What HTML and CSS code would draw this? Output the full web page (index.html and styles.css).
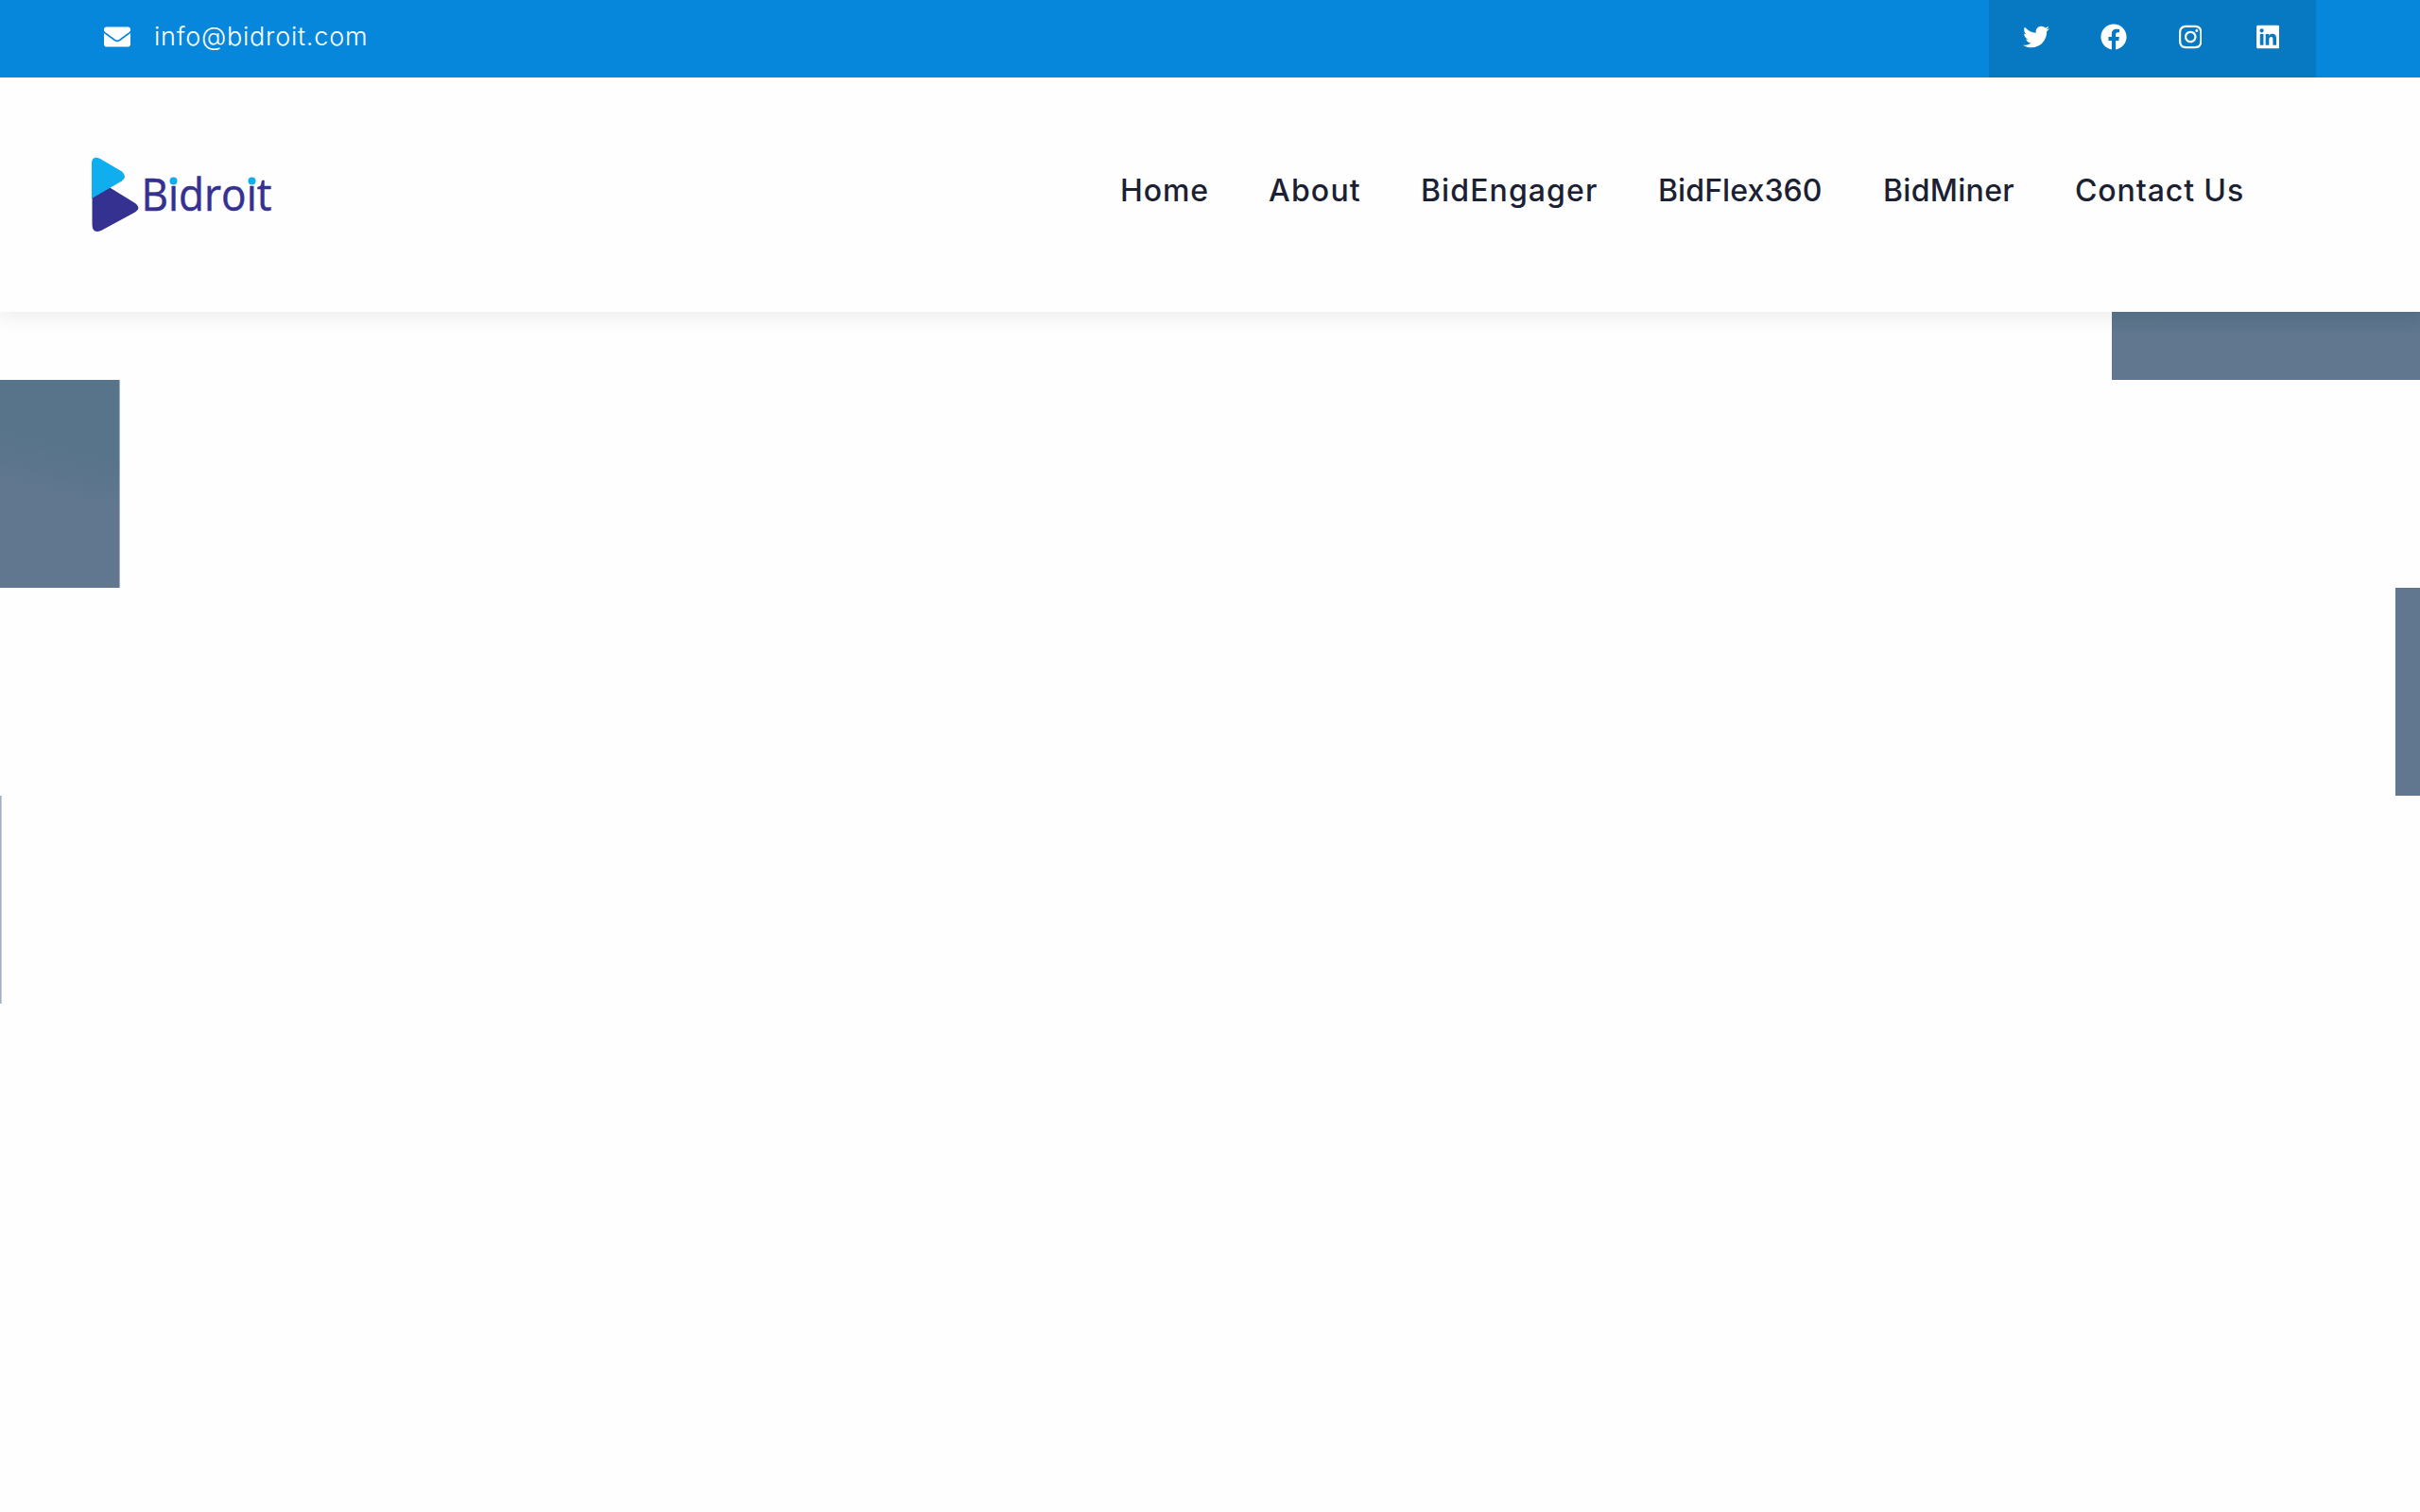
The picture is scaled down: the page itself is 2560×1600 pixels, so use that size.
FILE: index.html
```html
<!DOCTYPE html>
<html lang="en">

<head>
    <meta charset="UTF-8">
    <title>Bidroit</title>
    <link rel="stylesheet" href="styles.css">
</head>

<body>

    <div class="topbar">
        <a class="mail" href="mailto:info@bidroit.com">
            <svg width="28" height="28" viewBox="0 0 512 512"><path d="M502.3 190.8c3.9-3.1 9.7-.2 9.7 4.7V400c0 26.500-21.500 48-48 48H48c-26.500 0-48-21.500-48-48V195.600c0-5 5.700-7.800 9.700-4.700 22.400 17.400 52.100 39.500 154.100 113.600 21.100 15.400 56.700 47.800 92.200 47.600 35.700.3 72-32.800 92.300-47.600 102-74.100 131.600-96.300 154-113.700zM256 320c23.200.4 56.600-29.200 73.400-41.400 132.700-96.300 142.800-104.700 173.400-128.700 5.800-4.500 9.200-11.500 9.200-18.900v-19c0-26.500-21.500-48-48-48H48c-26.500 0-48 21.500-48 48v19c0 7.400 3.400 14.300 9.200 18.900 30.600 23.900 40.700 32.400 173.400 128.700 16.800 12.200 50.200 41.800 73.400 41.400z"/></svg>
            <span>info@bidroit.com</span>
        </a>

        <div class="social">
            <a href="#" aria-label="Twitter"><svg width="28" height="28" viewBox="0 0 512 512"><path d="M459.370 151.716c.325 4.548.325 9.097.325 13.645 0 138.720-105.583 298.558-298.558 298.558-59.452 0-114.680-17.219-161.137-47.106 8.447.974 16.568 1.299 25.340 1.299 49.055 0 94.213-16.568 130.274-44.832-46.132-.975-84.792-31.188-98.112-72.772 6.498.974 12.995 1.624 19.818 1.624 9.421 0 18.843-1.300 27.614-3.573-48.081-9.747-84.143-51.980-84.143-102.985v-1.299c13.969 7.797 30.214 12.670 47.431 13.319-28.264-18.843-46.781-51.005-46.781-87.391 0-19.492 5.197-37.360 14.294-52.954 51.655 63.675 129.300 105.258 216.365 109.807-1.624-7.797-2.599-15.918-2.599-24.040 0-57.828 46.782-104.934 104.934-104.934 30.213 0 57.502 12.670 76.670 33.137 23.715-4.548 46.456-13.320 66.599-25.340-7.798 24.366-24.366 44.833-46.132 57.827 21.117-2.273 41.584-8.122 60.426-16.243-14.292 20.791-32.161 39.308-52.628 54.253z"/></svg></a>
            <a href="#" aria-label="Facebook"><svg width="28" height="28" viewBox="0 0 512 512"><path d="M504 256C504 119 393 8 256 8S8 119 8 256c0 123.780 90.690 226.380 209.250 245V327.690h-63V256h63v-54.640c0-62.150 37-96.480 93.670-96.480 27.140 0 55.520 4.840 55.520 4.840v61h-31.280c-30.800 0-40.410 19.120-40.410 38.730V256h68.780l-11 71.690h-57.780V501C413.310 482.380 504 379.780 504 256z"/></svg></a>
            <a href="#" aria-label="Instagram"><svg width="24.500" height="28" viewBox="0 0 448 512"><path d="M224.100 141c-63.600 0-114.900 51.300-114.900 114.900s51.300 114.900 114.900 114.900S339 319.500 339 255.900 287.700 141 224.100 141zm0 189.600c-41.100 0-74.700-33.500-74.700-74.700s33.500-74.700 74.700-74.700 74.700 33.500 74.700 74.700-33.600 74.700-74.700 74.700zm146.400-194.300c0 14.900-12 26.800-26.800 26.800-14.900 0-26.800-12-26.800-26.800s12-26.800 26.800-26.800 26.800 12 26.800 26.800zm76.100 27.200c-1.700-35.900-9.900-67.700-36.200-93.900-26.200-26.200-58-34.400-93.900-36.200-37-2.100-147.900-2.100-184.900 0-35.800 1.700-67.600 9.900-93.900 36.100s-34.400 58-36.200 93.900c-2.100 37-2.100 147.900 0 184.900 1.700 35.900 9.900 67.700 36.200 93.900s58 34.400 93.900 36.200c37 2.100 147.900 2.100 184.900 0 35.900-1.700 67.700-9.900 93.900-36.200 26.200-26.200 34.400-58 36.200-93.900 2.100-37 2.100-147.800 0-184.800zM398.800 388c-7.800 19.600-22.900 34.700-42.600 42.600-29.500 11.700-99.500 9-132.100 9s-102.700 2.600-132.100-9c-19.600-7.800-34.700-22.900-42.600-42.600-11.700-29.500-9-99.500-9-132.100s-2.600-102.700 9-132.100c7.800-19.600 22.900-34.700 42.600-42.600 29.500-11.700 99.500-9 132.100-9s102.700-2.600 132.100 9c19.600 7.800 34.700 22.900 42.600 42.600 11.700 29.500 9 99.500 9 132.100s2.700 102.700-9 132.100z"/></svg></a>
            <a href="#" aria-label="LinkedIn"><svg width="24.500" height="28" viewBox="0 0 448 512"><path d="M416 32H31.900C14.300 32 0 46.500 0 64.300v383.400C0 465.500 14.300 480 31.900 480H416c17.600 0 32-14.500 32-32.300V64.300c0-17.800-14.400-32.300-32-32.300zM135.400 416H69V202.200h66.500V416zm-33.200-243c-21.300 0-38.500-17.300-38.500-38.500S80.900 96 102.200 96c21.200 0 38.500 17.300 38.500 38.500 0 21.300-17.200 38.500-38.500 38.500zm282.100 243h-66.400V312c0-24.800-.5-56.700-34.500-56.700-34.600 0-39.900 27-39.900 54.900V416h-66.400V202.200h63.700v29.200h.9c8.900-16.800 30.600-34.500 62.900-34.500 67.200 0 79.700 44.300 79.700 101.900V416z"/></svg></a>
        </div>
    </div>

    <header>
        <a class="logo" href="#">
            <svg width="200" height="90" viewBox="0 0 200 90">
                <path fill="#353190" d="M1.500 21 L1.500 75 Q1.500 86 11 82 L47 62.500 Q54 58 47 53 L21 37 Z"/>
                <path fill="#10aeef" d="M1 48 L1 11 Q1 2 10 6 L33 19.500 Q39 25 33 29.500 Z"/>
                <text x="53.500" y="61" textLength="138" lengthAdjust="spacingAndGlyphs">Bidroit</text>
                <circle cx="87.500" cy="29.500" r="4"/>
                <circle cx="170.500" cy="29.500" r="4"/>
            </svg>
        </a>

        <nav>
            <a class="home" href="#">Home</a>
            <a class="about" href="#">About</a>
            <a class="engager" href="#">BidEngager</a>
            <a class="flex360" href="#">BidFlex360</a>
            <a class="miner" href="#">BidMiner</a>
            <a class="contact" href="#">Contact Us</a>
        </nav>
    </header>

    <!-- slider in the middle of its tile transition -->
    <section class="slider">
        <div class="row"><div class="tile top-right"></div></div>
        <div class="row"><div class="tile left"></div></div>
        <div class="row"><div class="tile right"></div></div>
        <div class="row"><div class="tile sliver"></div></div>
    </section>

</body>

</html>
```
FILE: styles.css
```css
* {
    box-sizing: border-box;
}

body {
    margin: 0;
    height: 1600px;
    overflow: hidden;
    background-color: #fefefe;
    font-family: Inter, sans-serif;
}

a {
    text-decoration: none;
}

svg {
    display: block;
    fill: currentColor;
}

.topbar {
    display: flex;
    justify-content: space-between;
    height: 82px;
    padding: 0 110px;
    background-color: #0787dc;
    color: white;
}

.topbar a {
    color: white;
}

.mail {
    display: flex;
    align-items: center;
    gap: 25px;
    height: 78px;
    font-size: 27px;
    font-weight: 300;
    letter-spacing: .78px;
}

.mail span {
    margin-top: -2px;
}

.social {
    display: flex;
    align-items: flex-start;
    width: 346px;
    padding-left: 9px;
    background-color: #0679c2;
}

.social a {
    display: flex;
    justify-content: center;
    align-items: center;
    width: 81.700px;
    height: 78px;
}

header {
    position: relative;
    display: flex;
    justify-content: space-between;
    height: 248px;
    padding: 0 186px 0 96px;
    background-color: #fefefe;
    box-shadow: 0 10px 15px rgba(25, 25, 25, .05);
}

.logo {
    margin-top: 80px;
}

.logo text {
    fill: #353190;
    stroke: #353190;
    stroke-width: .5px;
    font-family: "Open Sans", sans-serif;
    font-size: 47px;
}

.logo circle {
    fill: #10aeef;
}

nav {
    display: flex;
    gap: 64px;
    margin-top: 99px;
}

nav a {
    color: #1b2132;
    font-size: 32px;
    font-weight: 500;
    line-height: 42px;
    white-space: nowrap;
}

.home {
    width: 93px;
    letter-spacing: .9px;
}

.about {
    width: 97px;
    letter-spacing: 1.2px;
}

.engager {
    width: 187px;
    letter-spacing: 1.1px;
}

.flex360 {
    width: 174px;
    letter-spacing: .1px;
}

.miner {
    width: 139px;
    letter-spacing: .3px;
}

.contact {
    width: 179px;
    letter-spacing: .9px;
}

.row {
    display: flex;
    height: 220px;
}

.row:first-child {
    height: 71.500px;
}

.tile {
    background-color: #60778f;
}

.top-right {
    width: 326px;
    margin-left: auto;
    background-image: linear-gradient(#58748b, #60778f 24px);
}

.left {
    width: 127px;
    border-right: 1px solid #a0aec2;
    background-image: linear-gradient(195deg, #58748b 35%, #60778f 55%);
}

.right {
    width: 26px;
    margin-left: auto;
}

.sliver {
    width: 2px;
    background-color: #c5cfdd;
    border-left: 1px solid #a0aec2;
}
```
